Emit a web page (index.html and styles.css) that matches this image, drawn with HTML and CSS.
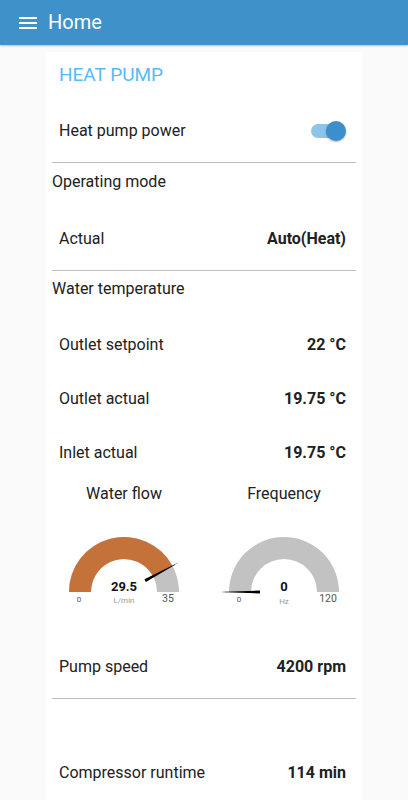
FILE: index.html
```html
<!DOCTYPE html>
<html lang="en">
<head>
<meta charset="utf-8">
<title>Home</title>
<link rel="stylesheet" href="styles.css">
</head>
<body>
<header class="appbar">
  <svg class="menu-icon" width="24" height="24" viewBox="0 0 24 24"><path d="M3 18h18v-2H3v2zm0-5h18v-2H3v2zm0-7v2h18V6H3z" fill="#fff"/></svg>
  <span class="appbar-title">Home</span>
</header>
<main class="main">
  <div class="card">
    <div class="card-title">HEAT PUMP</div>
    <div class="row">
      <span class="label">Heat pump power</span>
      <span class="switch"><span class="switch-track"></span><span class="switch-knob"></span></span>
    </div>

    <section class="group group-first">
      <div class="group-title">Operating mode</div>
      <div class="row"><span class="label">Actual</span><span class="value">Auto(Heat)</span></div>
    </section>

    <section class="group group-tight">
      <div class="group-title">Water temperature</div>
      <div class="row"><span class="label">Outlet setpoint</span><span class="value">22 °C</span></div>
      <div class="row"><span class="label">Outlet actual</span><span class="value">19.75 °C</span></div>
      <div class="row"><span class="label">Inlet actual</span><span class="value">19.75 °C</span></div>
      <div class="gauges">
        <div class="gauge">
          <div class="gauge-title">Water flow</div>
          <svg class="gauge-svg" width="140" height="134" viewBox="0 0 140 134">
            <path d="M15 86 A55 55 0 0 1 125 86 L103 86 A33 33 0 0 0 37 86 Z" fill="#c2c2c2"/>
            <path d="M15 86 A55 55 0 0 1 118.43 59.92 L99.06 70.35 A33 33 0 0 0 37 86 Z" fill="#c5713a"/>
            <line x1="120.5" y1="58.5" x2="123.5" y2="56.9" stroke="#9a9a9a" stroke-width="0.8"/>
            <polygon points="91.84,75.94 90.42,73.30 120.93,58.24 121.21,58.76" fill="#000"/>
            <text x="70" y="85" class="g-value">29.5</text>
            <text x="70" y="97" class="g-unit">L/min</text>
            <text x="25" y="96" class="g-min">0</text>
            <text x="114" y="96" class="g-max">35</text>
          </svg>
        </div>
        <div class="gauge">
          <div class="gauge-title">Frequency</div>
          <svg class="gauge-svg" width="140" height="134" viewBox="0 0 140 134">
            <path d="M15 86 A55 55 0 0 1 125 86 L103 86 A33 33 0 0 0 37 86 Z" fill="#c2c2c2"/>
            <line x1="8" y1="86" x2="12" y2="86" stroke="#9a9a9a" stroke-width="0.8"/>
            <polygon points="46,84.5 46,87.5 11,86.3 11,85.7" fill="#000"/>
            <text x="70" y="85" class="g-value">0</text>
            <text x="70" y="98" class="g-unit">Hz</text>
            <text x="25" y="96" class="g-min">0</text>
            <text x="114" y="96" class="g-max">120</text>
          </svg>
        </div>
      </div>
      <div class="row"><span class="label">Pump speed</span><span class="value">4200 rpm</span></div>
    </section>

    <section class="group group-tight">
      <div class="group-title"></div>
      <div class="row"><span class="label">Compressor runtime</span><span class="value">114 min</span></div>
    </section>
  </div>
</main>
</body>
</html>
```

FILE: styles.css
```css
* { box-sizing: border-box; }

html, body {
  margin: 0;
  padding: 0;
}

body {
  background: #fafafa;
  font-family: Roboto, "Noto Sans", Arial, sans-serif;
  color: #212121;
  width: 408px;
  height: 800px;
  overflow: hidden;
}

.appbar {
  height: 45px;
  background: #3f91c9;
  display: flex;
  align-items: center;
  padding-left: 16px;
  gap: 8px;
  box-shadow: 0 1px 2px rgba(0, 0, 0, 0.25);
  position: relative;
  z-index: 1;
}

.menu-icon {
  display: block;
  margin-top: 1px;
}

.appbar-title {
  color: #fff;
  font-size: 20px;
  line-height: 45px;
}

.main {
  padding-top: 7px;
  display: flex;
  justify-content: center;
}

.card {
  width: 316px;
  min-height: 760px;
  background: #fff;
  padding: 0 6px;
}

.card-title {
  color: #58baf6;
  font-size: 19px;
  line-height: 28px;
  padding: 9px 7px 0;
  margin-bottom: 15px;
}

.row {
  height: 54px;
  display: flex;
  align-items: center;
  justify-content: space-between;
  padding: 0 10px 0 7px;
  font-size: 16px;
  line-height: 24px;
}

.value {
  font-weight: 700;
}

.group {
  margin-top: 6px;
  border-top: 1px solid #bdbdbd;
  padding-top: 6px;
}

.group-first {
  margin-top: 4px;
  padding-top: 7px;
}

.group-first .group-title {
  margin-bottom: 18px;
}

.group-tight {
  margin-top: 4px;
}

.group-title {
  font-size: 16px;
  line-height: 24px;
  height: 24px;
  margin-bottom: 17px;
}

.switch {
  position: relative;
  width: 35px;
  height: 20px;
  display: block;
}

.switch-track {
  position: absolute;
  left: 0;
  top: 3px;
  width: 31px;
  height: 14px;
  border-radius: 7px;
  background: #8dc4e8;
}

.switch-knob {
  position: absolute;
  right: 0;
  top: 0;
  width: 20px;
  height: 20px;
  border-radius: 50%;
  background: #3d8fcb;
  box-shadow: 0 1px 2px rgba(0, 0, 0, 0.3);
}

.gauges {
  display: grid;
  grid-template-columns: 140px 140px;
  column-gap: 20px;
  justify-content: center;
  margin: 2px -6px 0;
}

.gauge {
  display: flex;
  flex-direction: column;
  align-items: center;
}

.gauge-title {
  font-size: 16px;
  line-height: 24px;
}

.gauge-svg {
  display: block;
}

.g-value {
  font-family: Roboto, Arial, sans-serif;
  font-size: 13px;
  font-weight: 700;
  fill: #111;
  text-anchor: middle;
}

.g-unit {
  font-family: Roboto, Arial, sans-serif;
  font-size: 8px;
  fill: #999;
  text-anchor: middle;
}

.g-min {
  font-family: Roboto, Arial, sans-serif;
  font-size: 8px;
  fill: #555;
  text-anchor: middle;
}

.g-max {
  font-family: Roboto, Arial, sans-serif;
  font-size: 10.5px;
  fill: #555;
  text-anchor: middle;
}
```
